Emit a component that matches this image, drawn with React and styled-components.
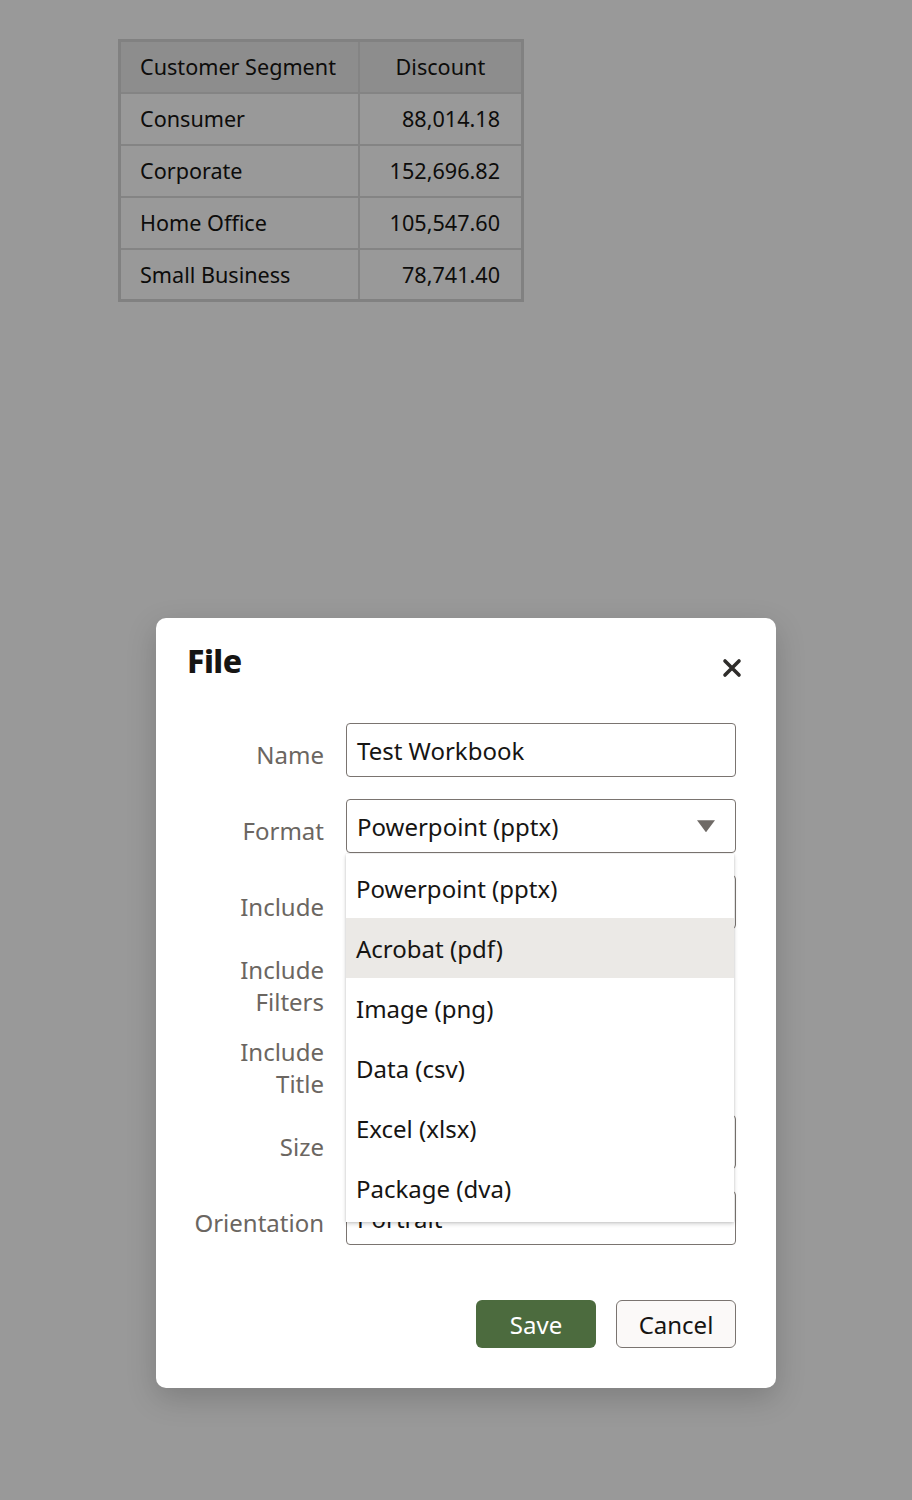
import React from 'react';
import styled, { createGlobalStyle } from 'styled-components';

const rows = [
  { segment: 'Consumer', discount: '88,014.18' },
  { segment: 'Corporate', discount: '152,696.82' },
  { segment: 'Home Office', discount: '105,547.60' },
  { segment: 'Small Business', discount: '78,741.40' },
];

const formats = [
  'Powerpoint (pptx)',
  'Acrobat (pdf)',
  'Image (png)',
  'Data (csv)',
  'Excel (xlsx)',
  'Package (dva)',
];

function Caret({ small }) {
  const w = small ? 8 : 18;
  return (
    <CaretSvg width={w} height={w * 0.7} viewBox='0 0 18 12' $small={small}>
      <path d='M0 0h18L9 12z' fill='currentColor' />
    </CaretSvg>
  );
}

function App() {
  return (
    <>
      <GlobalStyle />
      <Page>
        <Table>
          <thead>
            <tr>
              <TH>Customer Segment</TH>
              <TH $center>Discount</TH>
            </tr>
          </thead>
          <tbody>
            {rows.map((row) => (
              <tr key={row.segment}>
                <TD>{row.segment}</TD>
                <TD $right>{row.discount}</TD>
              </tr>
            ))}
          </tbody>
        </Table>

        <Overlay>
          <Dialog>
            <Header>
              <Title>File</Title>
              <CloseButton aria-label='Close'>
                <svg width='20' height='20' viewBox='0 0 20 20'>
                  <path
                    d='M3 3l14 14M17 3L3 17'
                    stroke='#2f2d2b'
                    strokeWidth='3.6'
                    strokeLinecap='round'
                  />
                </svg>
              </CloseButton>
            </Header>

            <Form>
              <Label>Name</Label>
              <Field>
                <TextBox>Test Workbook</TextBox>
              </Field>

              <Label>Format</Label>
              <Field>
                <Select>
                  <span>Powerpoint (pptx)</span>
                  <Caret />
                </Select>
                <Menu>
                  {formats.map((f, i) => (
                    <MenuItem key={f} $active={i === 1}>
                      {f}
                    </MenuItem>
                  ))}
                </Menu>
              </Field>

              <Label>Include</Label>
              <Field>
                <Select>
                  <span>Visualization</span>
                  <Caret small />
                </Select>
              </Field>

              <Label $tall>
                Include
                <br />
                Filters
              </Label>
              <Field $tall />

              <Label $tall>
                Include
                <br />
                Title
              </Label>
              <Field $tall />

              <Label>Size</Label>
              <Field>
                <Select>
                  <span>Default</span>
                  <Caret small />
                </Select>
              </Field>

              <Label>Orientation</Label>
              <Field>
                <Select>
                  <span>Portrait</span>
                  <Caret small />
                </Select>
              </Field>
            </Form>

            <Footer>
              <PrimaryButton>Save</PrimaryButton>
              <SecondaryButton>Cancel</SecondaryButton>
            </Footer>
          </Dialog>
        </Overlay>
      </Page>
    </>
  );
}

export default App;

const GlobalStyle = createGlobalStyle`
  body {
    margin: 0;
    background: #ffffff;
    font-family: 'Noto Sans', 'Open Sans', sans-serif;
    color: #161513;
  }
`;

const Page = styled.div`
  position: relative;
  min-height: 1500px;
  padding: 39px 0 0 118px;
  box-sizing: border-box;
`;

const Table = styled.table`
  border-collapse: collapse;
  border: 3px solid #d8d8d8;
  font-size: 21.6px;
  width: 406px;
`;

const TH = styled.th`
  height: 52px;
  box-sizing: border-box;
  background: #ececec;
  border: 2px solid #dddddd;
  font-weight: 400;
  text-align: ${(p) => (p.$center ? 'center' : 'left')};
  padding: 0 19px;
  width: ${(p) => (p.$center ? '164px' : '242px')};
`;

const TD = styled.td`
  height: 52px;
  box-sizing: border-box;
  border: 2px solid #dddddd;
  text-align: ${(p) => (p.$right ? 'right' : 'left')};
  padding: 0 ${(p) => (p.$right ? '21px' : '19px')};
`;

const Overlay = styled.div`
  position: absolute;
  inset: 0;
  background: rgba(0, 0, 0, 0.4);
  padding: 618px 0 0 156px;
  box-sizing: border-box;
`;

const Dialog = styled.div`
  width: 620px;
  height: 770px;
  box-sizing: border-box;
  background: #ffffff;
  border-radius: 10px;
  box-shadow: 0 10px 30px rgba(0, 0, 0, 0.18);
  padding: 20px 26px 40px 31px;
  display: flex;
  flex-direction: column;
`;

const Header = styled.div`
  display: flex;
  align-items: center;
  justify-content: space-between;
  height: 44px;
`;

const Title = styled.h1`
  margin: 0;
  font-size: 32px;
  font-weight: 800;
  letter-spacing: -0.5px;
  color: #161513;
`;

const CloseButton = styled.button`
  border: none;
  background: none;
  padding: 0;
  width: 36px;
  height: 36px;
  margin-top: 16px;
  display: flex;
  align-items: center;
  justify-content: center;
`;

const Form = styled.div`
  margin-top: 41px;
  display: grid;
  grid-template-columns: 137px 390px;
  column-gap: 22px;
  row-gap: 22px;
  align-items: start;
  font-size: 24px;
`;

const Label = styled.div`
  text-align: right;
  color: #6b6661;
  line-height: 32px;
  height: ${(p) => (p.$tall ? '60px' : '54px')};
  box-sizing: border-box;
  padding-top: ${(p) => (p.$tall ? '3px' : '16px')};
  white-space: nowrap;
`;

const Field = styled.div`
  position: relative;
  height: ${(p) => (p.$tall ? '60px' : '54px')};
`;

const TextBox = styled.div`
  height: 54px;
  box-sizing: border-box;
  border: 1.5px solid #7a7470;
  border-radius: 4px;
  padding: 0 10px;
  display: flex;
  align-items: center;
  color: #161513;
`;

const Select = styled(TextBox)`
  justify-content: space-between;
  padding-right: 20px;
`;

const CaretSvg = styled.svg`
  color: ${(p) => (p.$small ? '#9a9591' : '#6f6a66')};
`;

const Menu = styled.div`
  position: absolute;
  top: 55px;
  left: 0;
  width: 388px;
  background: #ffffff;
  padding: 4px 0;
  box-shadow: 0 2px 4px rgba(0, 0, 0, 0.18), 0 0 2px rgba(0, 0, 0, 0.12);
  z-index: 2;
`;

const MenuItem = styled.div`
  height: 60px;
  display: flex;
  align-items: center;
  padding-left: 10px;
  background: ${(p) => (p.$active ? '#ebe9e6' : '#ffffff')};
  color: #161513;
`;

const Footer = styled.div`
  margin-top: auto;
  display: flex;
  justify-content: flex-end;
  gap: 20px;
  padding-right: 14px;
`;

const BaseButton = styled.button`
  width: 120px;
  height: 48px;
  border-radius: 6px;
  font-family: 'Noto Sans', 'Open Sans', sans-serif;
  font-size: 24px;
  display: flex;
  align-items: center;
  justify-content: center;
`;

const PrimaryButton = styled(BaseButton)`
  background: #4c6b3e;
  border: none;
  color: #ffffff;
`;

const SecondaryButton = styled(BaseButton)`
  background: #fbf9f8;
  border: 1.5px solid #7a7470;
  color: #161513;
`;
